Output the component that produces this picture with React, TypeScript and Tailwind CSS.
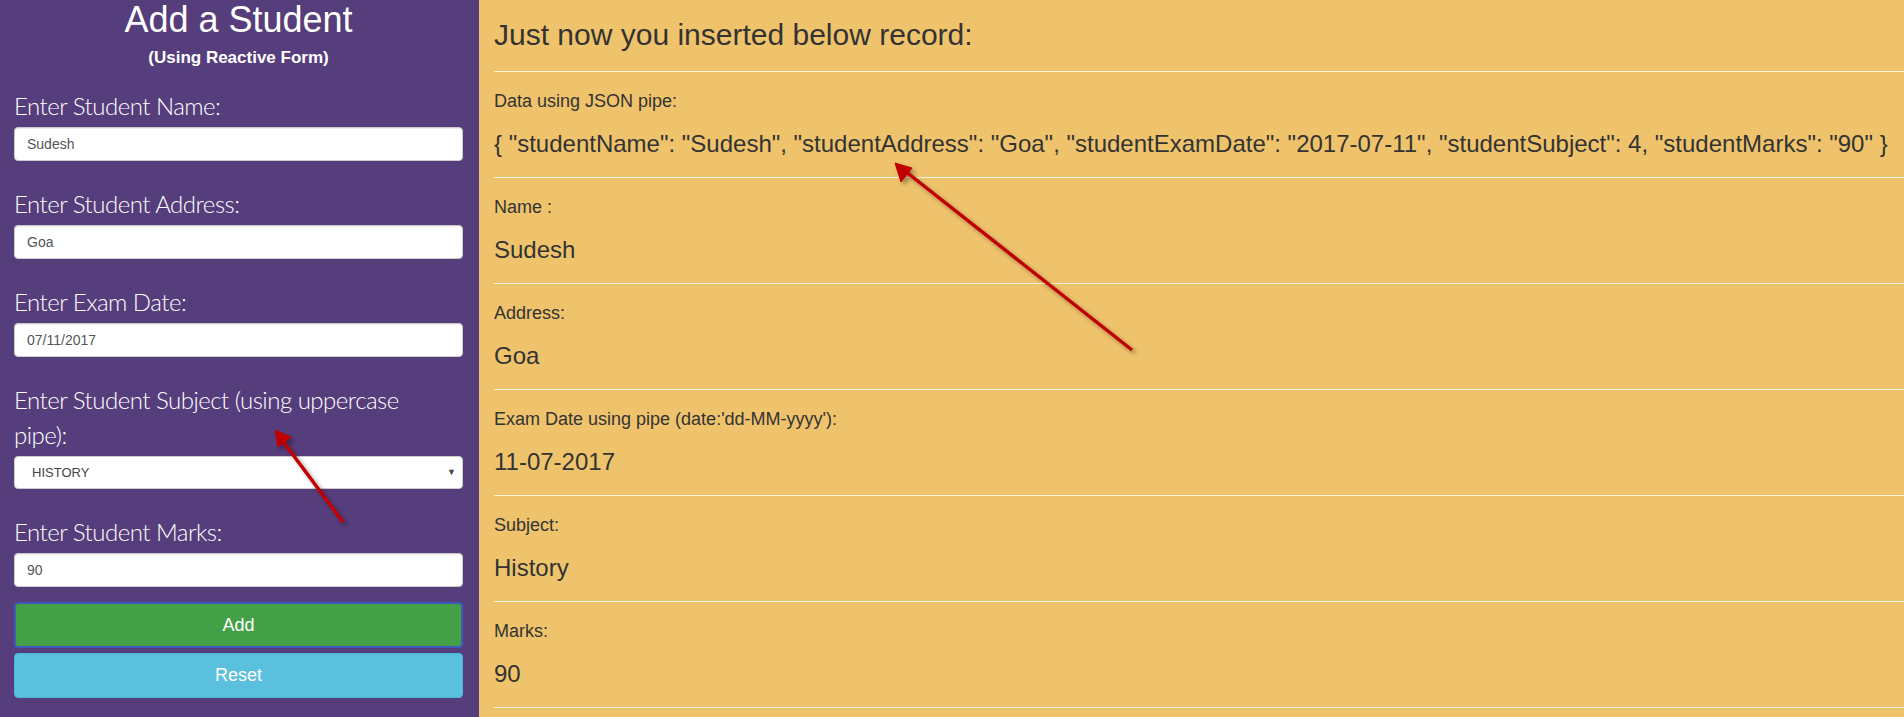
import React from 'react';

export default function App() {
  const record = [
    { label: 'Name :', value: 'Sudesh' },
    { label: 'Address:', value: 'Goa' },
    { label: "Exam Date using pipe (date:'dd-MM-yyyy'):", value: '11-07-2017' },
    { label: 'Subject:', value: 'History' },
    { label: 'Marks:', value: '90' },
  ];

  const json =
    '{ "studentName": "Sudesh", "studentAddress": "Goa", "studentExamDate": "2017-07-11", "studentSubject": 4, "studentMarks": "90" }';

  const labelCls =
    "block text-[24px] leading-[35px] font-light tracking-[-0.5px] text-white font-['Lato',sans-serif] mb-[4px]";
  const inputCls =
    "block w-full h-[34px] px-[12px] bg-white border border-[#ccc] rounded-[4px] text-[14px] text-[#555] font-['Liberation_Sans',Arial,sans-serif] shadow-[inset_0_1px_1px_rgba(0,0,0,0.075)] outline-none";

  return (
    <div className="relative flex min-h-screen w-full overflow-hidden font-['Liberation_Sans',Arial,sans-serif]">
      {/* Left form column */}
      <div className="w-[479px] shrink-0 bg-[#563d7c] pl-[14px] pr-[16px]">
        <h1 className="text-center text-[36px] leading-[40px] text-white">Add a Student</h1>
        <h4 className="mt-[6px] mb-[18px] text-center text-[17px] leading-[24px] font-bold text-white">
          (Using Reactive Form)
        </h4>

        <label className={labelCls}>Enter Student Name:</label>
        <input className={inputCls} defaultValue="Sudesh" />

        <label className={`${labelCls} mt-[25px]`}>Enter Student Address:</label>
        <input className={inputCls} defaultValue="Goa" />

        <label className={`${labelCls} mt-[25px]`}>Enter Exam Date:</label>
        <input className={inputCls} defaultValue="07/11/2017" />

        <label className={`${labelCls} mt-[25px]`}>
          Enter Student Subject (using uppercase
          <br />
          pipe):
        </label>
        <div className="flex h-[33px] items-center justify-between rounded-[4px] border border-[#ccc] bg-white pl-[17px] pr-[6px] text-[13px] text-[#444]">
          <span>HISTORY</span>
          <span className="text-[9px] text-[#444]">▼</span>
        </div>

        <label className={`${labelCls} mt-[25px]`}>Enter Student Marks:</label>
        <input className={inputCls} defaultValue="90" />

        <button className="mt-[15px] block h-[46px] w-full rounded-[4px] border-2 border-[#3f5ab8] bg-[#43a047] text-[18px] text-white">
          Add
        </button>
        <button className="mt-[5px] block h-[45px] w-full rounded-[4px] border border-[#46b8da] bg-[#5bc0de] text-[18px] text-white">
          Reset
        </button>
      </div>

      {/* Right record column */}
      <div className="flex-1 bg-[#efc36c] pl-[15px] text-[#333]">
        <h2 className="pt-[18px] pb-[20px] text-[30px] leading-[33px]">Just now you inserted below record:</h2>

        <div className="border-t border-[#fbf1df] pt-[16px] pb-[20px]">
          <p className="text-[18px] leading-[26px]">Data using JSON pipe:</p>
          <p className="mt-[17px] whitespace-nowrap text-[24px] leading-[26px]">{json}</p>
        </div>

        {record.map((r) => (
          <div key={r.label} className="border-t border-[#fbf1df] pt-[16px] pb-[20px]">
            <p className="text-[18px] leading-[26px]">{r.label}</p>
            <p className="mt-[17px] text-[24px] leading-[26px]">{r.value}</p>
          </div>
        ))}
        <div className="border-t border-[#fbf1df]" />
      </div>

      {/* Annotation arrows */}
      <svg className="pointer-events-none absolute inset-0" width="1904" height="717">
        <defs>
          <filter id="sh" x="-20%" y="-20%" width="140%" height="140%">
            <feDropShadow dx="3" dy="3" stdDeviation="2" floodColor="#000" floodOpacity="0.35" />
          </filter>
        </defs>
        <g filter="url(#sh)" fill="#c00000" stroke="#c00000">
          <line x1="1132" y1="350" x2="905" y2="171" strokeWidth="3.5" />
          <polygon points="895,163 912,168 901,182" strokeWidth="1" />
          <line x1="343" y1="522" x2="282" y2="440" strokeWidth="3.5" />
          <polygon points="275,430 291,437 278,447" strokeWidth="1" />
        </g>
      </svg>
    </div>
  );
}
